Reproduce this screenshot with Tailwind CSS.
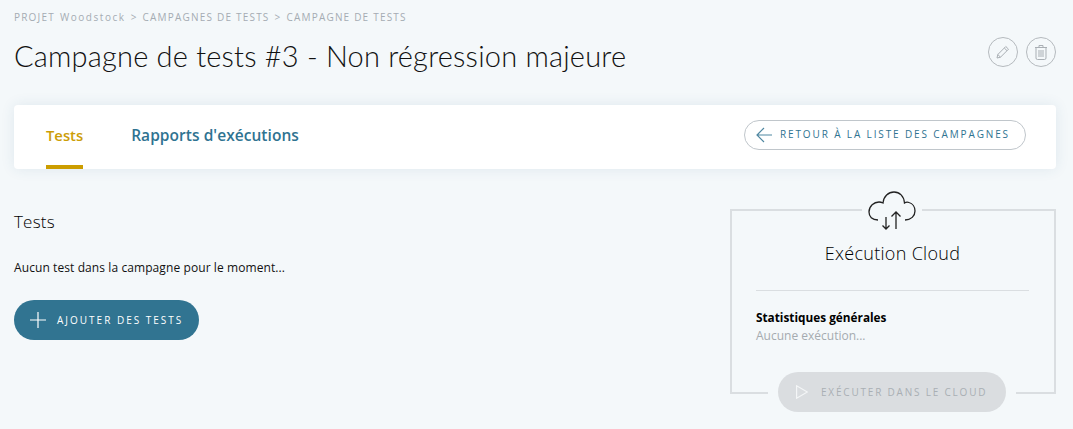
<!DOCTYPE html>
<html lang="fr">
<head>
    <meta charset="UTF-8">
    <meta name="viewport" content="width=device-width, initial-scale=1.0">
    <title>Campagne de tests</title>
    <script src="https://cdn.jsdelivr.net/npm/@tailwindcss/browser@4"></script>
</head>
<body class="bg-[#f4f8fa] h-[429px] overflow-hidden font-['Open_Sans',sans-serif] text-black">
    <div class="pl-[14px] pr-[17px] pt-[10px]">
        <!-- Breadcrumb -->
        <div class="h-[14px] flex items-center gap-[5px] text-[10px] font-medium tracking-[1.2px] text-[#a5acb3] whitespace-nowrap">
            <span>PROJET</span>
            <span class="font-normal tracking-[1.55px]">Woodstock</span><span>&gt;</span><span>CAMPAGNES DE TESTS</span><span>&gt;</span><span>CAMPAGNE DE TESTS</span>
        </div>

        <!-- Title -->
        <div class="flex justify-between items-start h-[81px]">
            <h1 class="mt-[14px] font-['Lato',sans-serif] font-light text-[29px] leading-[36px] tracking-[0.2px] text-[#111]">Campagne de tests #3 - Non régression majeure</h1>
            <div class="flex gap-[8px] mt-[13px]">
                <button class="w-[30px] h-[30px] rounded-full border border-[#b5babe] flex items-center justify-center">
                    <svg class="w-[14px] h-[14px]" viewBox="0 0 14 14" fill="none" stroke="#a9afb4" stroke-width="1"><path d="M1 13l.8-3.500L9.800 1.500 12.500 4.200 4.500 12.200zM1.800 9.500l2.700 2.700M8.300 3l2.700 2.700"/></svg>
                </button>
                <button class="w-[30px] h-[30px] rounded-full border border-[#b5babe] flex items-center justify-center">
                    <svg class="w-[12px] h-[15px]" viewBox="0 0 12 15" fill="none" stroke="#a9afb4" stroke-width="1"><path d="M0 2.500h12M4 2.500V.5h4v2M1 2.500v10.500a1.500 1.500 0 0 0 1.500 1.500h7a1.500 1.500 0 0 0 1.500-1.500V2.500M4 5v7M6 5v7M8 5v7"/></svg>
                </button>
            </div>
        </div>

        <!-- Tabs -->
        <div class="h-[64px] bg-white rounded-[4px] shadow-[0_0_14px_rgba(40,90,130,0.1)] flex items-center justify-between pl-[32px] pr-[30px]">
            <div class="flex gap-[48px] h-full">
                <a class="relative flex items-center pb-[3px] text-[14.8px] font-semibold text-[#cc9d06]">Tests<span class="absolute left-0 right-0 bottom-0 h-[4px] bg-[#cc9d00]"></span></a>
                <a class="flex items-center pb-[3px] text-[15.5px] tracking-[0.05px] font-semibold text-[#2f7391]">Rapports d'exécutions</a>
            </div>
            <button class="w-[282px] h-[30px] mb-[5px] rounded-full border border-[#c0c6cb] flex items-center pl-[11px] gap-[8px] text-[#2f7391]">
                <svg class="w-[16px] h-[16px] shrink-0" viewBox="0 0 16 16" fill="none" stroke="#4f87a1" stroke-width="1.200"><path d="M16 8H1M8 1L1 8l7 7"/></svg>
                <span class="text-[10px] tracking-[1.87px] whitespace-nowrap">RETOUR À LA LISTE DES CAMPAGNES</span>
            </button>
        </div>

        <!-- Content -->
        <div class="flex justify-between pt-[41px]">
            <div>
                <h2 class="text-[17px] font-[350] tracking-[0.2px] leading-[24px] text-black">Tests</h2>
                <p class="mt-[25px] text-[12px] tracking-[0.09px] leading-[18px] text-[#111]">Aucun test dans la campagne pour le moment...</p>
                <button class="mt-[23px] w-[185px] h-[40px] rounded-full bg-[#317491] flex items-center pl-[15px] gap-[10px] text-white">
                    <svg class="w-[18px] h-[18px] shrink-0" viewBox="0 0 18 18" fill="none" stroke="#fff" stroke-width="1.200"><path d="M9 1v16M1 9h16"/></svg>
                    <span class="text-[10px] font-medium tracking-[2px] whitespace-nowrap">AJOUTER DES TESTS</span>
                </button>
            </div>

            <!-- Cloud panel -->
            <div class="relative w-[326px] h-[185px] border-2 border-[#dadee1] pl-[24px] pr-[25px] mt-[-1px]">
                <div class="absolute left-[130px] top-[-20px] w-[60px] h-[40px] bg-[#f4f8fa] flex justify-center">
                    <svg class="w-[48px] h-[39px]" viewBox="0 0 48 39" fill="none" stroke="#222" stroke-width="1.300"><path d="M10 29C4 29 1 25.500 1 21 1 15 6 11 11 11c1.500 0 3 .5 4 1C15.500 5.500 20.500 1 26 1c5.500 0 10 4 10.500 11 1.500-1 3-1 4.500-.5 3.500 1 6 4.500 6 8.500 0 5-4 9-10 9"/><path d="M18 26v12M14.500 34.500L18 38l3.500-3.500"/><path d="M28 38V21M23.500 25.500L28 21l4.500 4.500"/></svg>
                </div>
                <div class="text-center text-[18px] font-[350] tracking-[0.3px] leading-[26px] text-black mt-[29px]">Exécution Cloud</div>
                <div class="border-t border-[#dadee1] mt-[24px]"></div>
                <div class="mt-[17px] text-[11.8px] leading-[18px] font-bold text-black">Statistiques générales</div>
                <div class="mt-[1px] text-[12px] leading-[18px] text-[#a5abb0]">Aucune exécution...</div>
                <div class="absolute left-[36px] bottom-[-20px] w-[248px] h-[40px] bg-[#f4f8fa] flex justify-center">
                    <button class="w-[228px] h-[40px] rounded-full bg-[#dadde0] flex items-center pl-[18px] gap-[13px]">
                        <svg class="w-[12px] h-[14px] shrink-0" viewBox="0 0 12 14" fill="none" stroke="#f4f6f7" stroke-width="1.200"><path d="M.6.8v12.400L11.400 7z"/></svg>
                        <span class="text-[10px] font-medium tracking-[1.8px] text-[#a9afb4] whitespace-nowrap">EXÉCUTER DANS LE CLOUD</span>
                    </button>
                </div>
            </div>
        </div>
    </div>
</body>
</html>
